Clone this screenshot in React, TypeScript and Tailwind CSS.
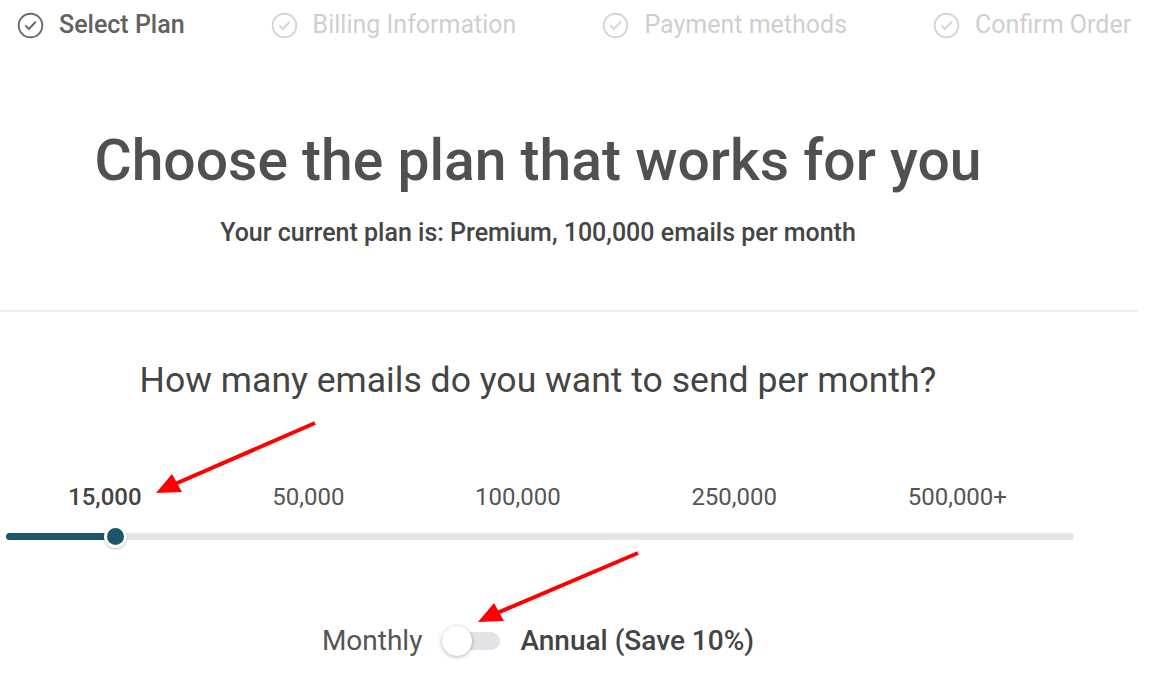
import React from 'react';

const steps = ['Select Plan', 'Billing Information', 'Payment methods', 'Confirm Order'];
const tiers = ['15,000', '50,000', '100,000', '250,000', '500,000+'];

const CheckCircle: React.FC<{ className?: string }> = ({ className }) => (
  <svg viewBox="0 0 24 24" className={className} fill="none" stroke="currentColor" strokeWidth={1.7} strokeLinecap="round" strokeLinejoin="round">
    <circle cx="12" cy="12" r="10.5" />
    <path d="M7.8 12.3l2.8 2.8 5.6-6" />
  </svg>
);

const App: React.FC = () => {
  return (
    <div className="relative w-[1151px] h-[677px] overflow-hidden bg-white font-['Roboto',sans-serif]">
      {/* stepper */}
      <div className="flex h-[50px] items-center gap-[86px] pl-[17px]">
        {steps.map((s, i) => (
          <div key={s} className="flex items-center gap-[15px]">
            <CheckCircle className={`h-[27px] w-[27px] ${i === 0 ? 'text-[#6a6a6a]' : 'text-[#d4d4d4]'}`} />
            <span className={`text-[25px] leading-[30px] ${i === 0 ? 'text-[#616161] font-medium' : 'text-[#cfcfcf]'}`}>{s}</span>
          </div>
        ))}
      </div>

      {/* heading */}
      <div className="flex w-[1076px] flex-col items-center">
        <h1 className="mt-[78px] whitespace-nowrap text-[57px] font-medium leading-[66px] text-[#505050]">Choose the plan that works for you</h1>
        <p className="mt-[24px] whitespace-nowrap text-[25px] font-medium leading-[30px] text-[#454545]">Your current plan is: Premium, 100,000 emails per month</p>
      </div>

      <div className="mt-[62px] h-[2px] w-[1137px] bg-[#ebebeb]" />

      {/* emails question */}
      <div className="mt-[47px] flex w-[1076px] justify-center">
        <h2 className="whitespace-nowrap text-[35.6px] leading-[42px] text-[#444]">How many emails do you want to send per month?</h2>
      </div>

      <div className="mt-[81px] flex w-[1080px] justify-between pl-[68px] pr-[73px] text-[24px] leading-[30px] text-[#555]">
        {tiers.map((t, i) => (
          <span key={t} className={i === 0 ? 'font-medium text-[#444]' : ''}>{t}</span>
        ))}
      </div>

      {/* slider */}
      <div className="relative ml-[6px] mt-[21px] h-[7px] w-[1068px] rounded-full bg-[#e6e6e6]">
        <div className="h-full w-[110px] rounded-full bg-[#1c5668]" />
        <div className="absolute left-[98px] top-[-8px] h-[23px] w-[23px] rounded-full border-[3px] border-white bg-[#1c5668] shadow-[0_1px_2px_rgba(0,0,0,0.25)]" />
      </div>

      {/* billing toggle */}
      <div className="mt-[84px] flex w-[1076px] items-center justify-center gap-[20px]">
        <span className="text-[28px] leading-[34px] text-[#555]">Monthly</span>
        <div className="relative h-[22px] w-[58px]">
          <div className="absolute left-[12px] top-[2px] h-[18px] w-[46px] rounded-full bg-[#e2e4e7]" />
          <div className="absolute left-0 top-[-4px] h-[30px] w-[30px] rounded-full bg-white shadow-[0_1px_4px_rgba(0,0,0,0.3)]" />
        </div>
        <span className="text-[28px] font-medium leading-[34px] text-[#444]">Annual (Save 10%)</span>
      </div>

      {/* annotation arrows */}
      <svg className="pointer-events-none absolute inset-0" width="1151" height="677">
        <line x1="315" y1="423" x2="175" y2="484" stroke="#ff0000" strokeWidth="4" />
        <polygon points="156,493 172,474 182,492" fill="#ff0000" />
        <line x1="638" y1="553" x2="497" y2="613" stroke="#ff0000" strokeWidth="4" />
        <polygon points="478,622 494,603 504,621" fill="#ff0000" />
      </svg>
    </div>
  );
};

export default App;
